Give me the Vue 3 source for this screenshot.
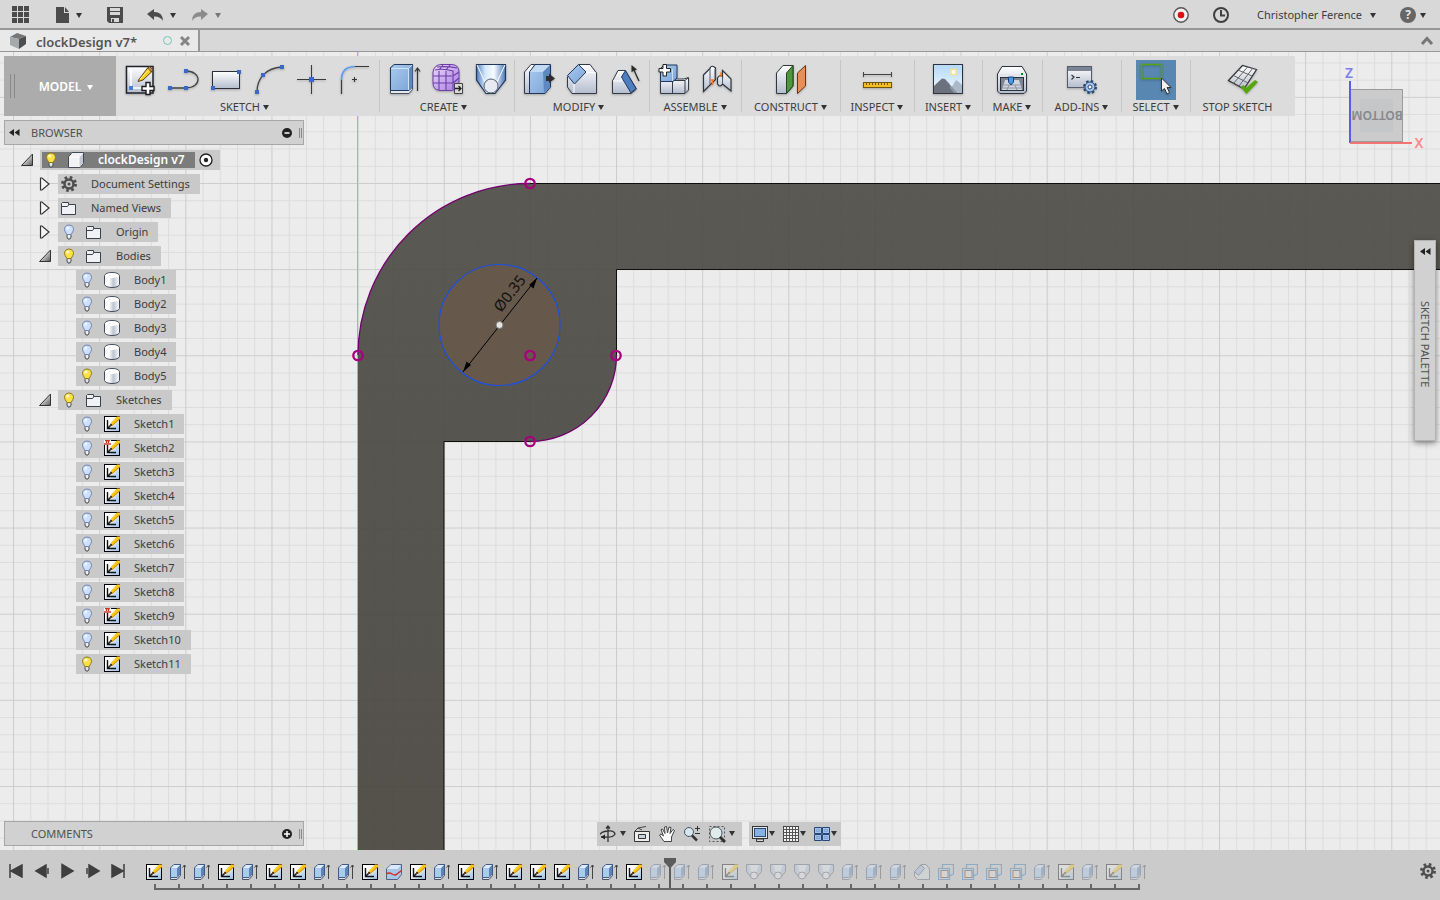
<script setup>
import { ref } from 'vue'

const groups = [
  { label: 'SKETCH', icons: ['t-sketch', 't-line', 't-rect', 't-arc', 't-point', 't-fillet'] },
  { label: 'CREATE', icons: ['t-extrude', 't-form', 't-loft'] },
  { label: 'MODIFY', icons: ['t-press', 't-chamfer', 't-draft'] },
  { label: 'ASSEMBLE', icons: ['t-component', 't-joint'] },
  { label: 'CONSTRUCT', icons: ['t-plane'] },
  { label: 'INSPECT', icons: ['t-measure'] },
  { label: 'INSERT', icons: ['t-image'] },
  { label: 'MAKE', icons: ['t-print'] },
  { label: 'ADD-INS', icons: ['t-script'] },
  { label: 'SELECT', icons: ['t-select'], active: true },
  { label: 'STOP SKETCH', icons: ['t-stop'], noMenu: true },
]

const tree = [
  { name: 'clockDesign v7', level: 0, open: true, bulb: 'on', icon: 'i-cube', root: true },
  { name: 'Document Settings', level: 1, open: false, icon: 'i-gear' },
  { name: 'Named Views', level: 1, open: false, icon: 'i-folder' },
  { name: 'Origin', level: 1, open: false, bulb: 'off', icon: 'i-folder' },
  { name: 'Bodies', level: 1, open: true, bulb: 'on', icon: 'i-folder' },
  ...[1, 2, 3, 4, 5].map((n) => ({
    name: `Body${n}`,
    level: 2,
    bulb: n === 5 ? 'on' : 'off',
    icon: 'i-body',
  })),
  { name: 'Sketches', level: 1, open: true, bulb: 'on', icon: 'i-folder' },
  ...[1, 2, 3, 4, 5, 6, 7, 8, 9, 10, 11].map((n) => ({
    name: `Sketch${n}`,
    level: 2,
    bulb: n === 11 ? 'on' : 'off',
    icon: n === 2 || n === 9 ? 'i-sketch-pin' : 'i-sketch',
  })),
]

// one letter per timeline feature
const featureIcons = {
  S: ['i-sketch', 'Sketch'],
  E: ['i-extrude', 'Extrude'],
  X: ['i-split', 'Split body'],
  L: ['i-loft', 'Loft'],
  C: ['i-chamfer', 'Chamfer'],
  P: ['i-pattern', 'Pattern'],
}
const features = 'SEESESSEESXSESESSSEESEEESLLLLEEECPPPPESESE'.split('').map((k) => featureIcons[k])
const current = ref(21)

const playback = [
  { name: 'Go to start', d: 'M1 2V16M2 9L13 3V15Z' },
  { name: 'Step back', d: 'M2 9L12 3V15ZM14 6V12' },
  { name: 'Play', d: 'M3 2.500L14 9L3 15.500Z' },
  { name: 'Step forward', d: 'M3 6V12M5 3L15 9L5 15Z' },
  { name: 'Go to end', d: 'M3 3L14 9L3 15ZM15 2V16' },
]

const navTools = [
  [
    { name: 'Orbit', icon: 'n-orbit', menu: true },
    { name: 'Look at', icon: 'n-look' },
    { name: 'Pan', icon: 'n-pan' },
    { name: 'Zoom', icon: 'n-zoom' },
    { name: 'Zoom window', icon: 'n-window', menu: true },
  ],
  [
    { name: 'Display settings', icon: 'n-display', menu: true },
    { name: 'Grid and snaps', icon: 'n-grid', menu: true },
    { name: 'Viewports', icon: 'n-views', menu: true },
  ],
]

const snapPoints = [
  [530, 183],
  [358, 355],
  [530, 355],
  [616, 355],
  [530, 441],
]
</script>

<template>
  <div class="app">
    <svg class="sprite" aria-hidden="true">
      <defs>
        <linearGradient id="g-steel" x1="0" y1="0" x2="0" y2="1">
          <stop offset="0" stop-color="#fff" />
          <stop offset="1" stop-color="#b4bccd" />
        </linearGradient>
        <linearGradient id="g-blue" x1="0" y1="0" x2="1" y2="1">
          <stop offset="0" stop-color="#a9cbef" />
          <stop offset="1" stop-color="#7ba3d6" />
        </linearGradient>
        <linearGradient id="g-loft" x1="0" y1="0" x2="1" y2="0">
          <stop offset="0" stop-color="#4f7cbc" />
          <stop offset=".3" stop-color="#d6e9fc" />
          <stop offset=".6" stop-color="#f7fbff" />
          <stop offset="1" stop-color="#4f7cbc" />
        </linearGradient>
        <linearGradient id="g-purple" x1="0" y1="0" x2="1" y2="1">
          <stop offset="0" stop-color="#ead9fb" />
          <stop offset="1" stop-color="#a87be0" />
        </linearGradient>
        <linearGradient id="g-sky" x1="0" y1="0" x2="0" y2="1">
          <stop offset="0" stop-color="#b4d9f7" />
          <stop offset="1" stop-color="#f1f9ff" />
        </linearGradient>
        <linearGradient id="g-body" x1="0" y1="0" x2="1" y2="0">
          <stop offset="0" stop-color="#fff" />
          <stop offset=".3" stop-color="#fff" />
          <stop offset=".6" stop-color="#bfc5cf" />
          <stop offset="1" stop-color="#fff" />
        </linearGradient>
        <linearGradient id="g-page" x1="0" y1="0" x2="1" y2="1">
          <stop offset=".3" stop-color="#fff" />
          <stop offset="1" stop-color="#8fbce8" />
        </linearGradient>
        <linearGradient id="g-tri" x1="0" y1="0" x2="1" y2="1">
          <stop offset=".3" stop-color="#eee" />
          <stop offset="1" stop-color="#555" />
        </linearGradient>
      </defs>

      <!-- toolbar icons -->
      <symbol id="t-sketch" viewBox="0 0 40 40">
        <path d="M6.500 6.500H33V33H6.500Z" fill="url(#g-steel)" stroke="#1f232b" stroke-width="1.500" />
        <path d="M11 10V28H25" fill="none" stroke="#fff" stroke-width="1.500" />
        <path d="M18.500 20L28 7.500L32.500 11L23 20L18 21.500Z" fill="#ffcd1c" stroke="#5b4316" />
        <path d="M27.500 8L29.500 6.500L33 9.500L31.500 12Z" fill="#c9864e" stroke="#5b3a1a" />
        <path d="M20 19L29 9.500" stroke="#fff3a0" />
        <rect x="9" y="26" width="4" height="4" fill="#3f7fd8" />
        <path d="M26 22.500h4v4h4v4h-4v4h-4v-4h-4v-4h4Z" fill="#fff" stroke="#1c1c1c" stroke-width="1.400" />
      </symbol>
      <symbol id="t-line" viewBox="0 0 40 40">
        <path d="M7 28H23C39 28 39 11 23 11" fill="none" stroke="#444" stroke-width="1.300" />
        <path d="M5 26h4v4h-4zM21 26h4v4h-4zM21 9h4v4h-4z" fill="#3a69c9" />
      </symbol>
      <symbol id="t-rect" viewBox="0 0 40 40">
        <rect x="6.500" y="11.500" width="27" height="17" fill="url(#g-steel)" stroke="#2c2f36" />
        <path d="M31 10h4v4h-4zM5 26h4v4h-4z" fill="#3a69c9" />
      </symbol>
      <symbol id="t-arc" viewBox="0 0 40 40">
        <path d="M8 32C8 18 17 8 33 7" fill="none" stroke="#444" stroke-width="1.300" />
        <path d="M6 30h4v4h-4zM12 13h4v4h-4zM31 5h4v4h-4z" fill="#3a69c9" />
      </symbol>
      <symbol id="t-point" viewBox="0 0 40 40">
        <path d="M5 19.500H34M19.500 5V34" stroke="#3b3b3b" />
        <rect x="17" y="17" width="5" height="5" fill="#3a69c9" />
      </symbol>
      <symbol id="t-fillet" viewBox="0 0 40 40">
        <path d="M20 6.500H34M6.500 20V34" stroke="#3b3b3b" stroke-width="1.200" />
        <path d="M6.500 20C6.500 11 11 6.500 20 6.500" fill="none" stroke="#5b9bf0" stroke-width="1.500" />
        <path d="M17 19.500h5M19.500 17v5" stroke="#333" />
      </symbol>
      <symbol id="t-extrude" viewBox="0 0 40 40">
        <path d="M6.500 8L10 4.500H28.500V29.500L25 33.500H6.500Z" fill="#e5e8ee" stroke="#4a505c" />
        <path d="M6.500 8L10 4.500H28.500V27L25 30.500H6.500Z" fill="url(#g-blue)" stroke="#21365c" />
        <path d="M7 8.500H24.500V30M24.500 8.500L28 5" fill="none" stroke="#cfe3f8" />
        <path d="M28.500 5V27L25 30.500V8.500Z" fill="#5e87bd" />
        <path d="M33.500 9V31M31 11.500L33.500 8L36 11.500" fill="none" stroke="#333" stroke-width="1.200" />
      </symbol>
      <symbol id="t-form" viewBox="0 0 40 40">
        <path d="M6 12Q7 5 14 4.500H25Q32 5 32 12V22Q31 30 24 30.500H13Q6 30 6 23Z" fill="url(#g-purple)" stroke="#6b3fa5" />
        <path d="M6 16H25M6 23H26M12 11V30M19 11V31M8 10Q16 8 26 11V29M26 16L32 12M26 23L32 18M12 10L16 5M19 10L23 5M10 7Q20 6 30 8" fill="none" stroke="#6b3fa5" stroke-width="1.100" />
        <path d="M27.500 23.500H35.500V33.500H27.500Z" fill="#d9d9d9" stroke="#444" />
        <path d="M28 28.500H34M31.500 26L34 28.500L31.500 31" fill="none" stroke="#222" stroke-width="1.300" />
      </symbol>
      <symbol id="t-loft" viewBox="0 0 40 40">
        <path d="M6.500 4.500H35.500V20L25 33.500H16L6.500 20Z" fill="url(#g-loft)" stroke="#21365c" stroke-width="1.200" />
        <path d="M7 5L15 22M35 5L27 22" stroke="#fff" />
        <circle cx="21" cy="26" r="7" fill="#e7ebf1" stroke="#555d6b" />
      </symbol>
      <symbol id="t-press" viewBox="0 0 40 40">
        <path d="M5.500 12L12 4.500H20V33.500H5.500Z" fill="url(#g-steel)" stroke="#343a46" />
        <path d="M10.500 12L16 4.500H31.500V27L26 33.500H10.500Z" fill="url(#g-blue)" stroke="#21365c" />
        <path d="M11 12H24L31 5H17Z" fill="#c3daf3" />
        <path d="M24 12L31 5V27L25 33Z" fill="#5d88c2" />
        <path d="M27 16H30V13.500L36 18.500L30 23V21H27Z" fill="#2d2d2d" />
      </symbol>
      <symbol id="t-chamfer" viewBox="0 0 40 40">
        <path d="M5.500 17L17 4.500H28L34.500 13V33.500H10L5.500 27Z" fill="url(#g-steel)" stroke="#343a46" />
        <path d="M12 24L24 12L34 13M12 24V33" fill="none" stroke="#fff" />
        <path d="M5.500 15.500L16.500 4.500L24 12L12.500 24Z" fill="url(#g-blue)" stroke="#21365c" />
      </symbol>
      <symbol id="t-draft" viewBox="0 0 40 40">
        <path d="M7.500 21L13 10.500H20L31.500 29L26 33.500H7.500Z" fill="url(#g-steel)" stroke="#343a46" />
        <path d="M8 21H16L20 11" fill="none" stroke="#fff" />
        <path d="M16.500 17L20.500 10.500L31 28.500L26 33Z" fill="#4d7fc0" stroke="#21365c" />
        <path d="M34 21L28 8" stroke="#2b2b2b" stroke-width="1.300" />
        <path d="M26.500 5L32 9.500L26.500 12Z" fill="#2b2b2b" />
      </symbol>
      <symbol id="t-component" viewBox="0 0 40 40">
        <path d="M6.500 22L8 19H30L34.500 17.500V30L31 33.500H6.500Z" fill="url(#g-steel)" stroke="#343a46" />
        <path d="M18.500 20.500V33M19 20.500H31L34 18M31 21V33" fill="none" stroke="#343a46" />
        <path d="M6.500 8.500L10 5H23V18L19 21.500H6.500Z" fill="url(#g-blue)" stroke="#21365c" />
        <path d="M18.500 9V21" stroke="#c8def5" />
        <path d="M9 4.500h3.500v4h4v3.500h-4v4h-3.500v-4h-4v-3.500h4Z" fill="#fff" stroke="#222" />
      </symbol>
      <symbol id="t-joint" viewBox="0 0 40 40">
        <path d="M6.500 15L13 8.500V8Q15 4.500 18.500 8V19.500L6.500 31.500Z" fill="url(#g-steel)" stroke="#2f343d" stroke-width="1.200" />
        <path d="M13 9V24M18 9V19" stroke="#565c68" />
        <path d="M20.500 18Q23 14 25.500 17V10.500L34 19V31L25.500 24Q23 28 20.500 24Z" fill="url(#g-steel)" stroke="#2f343d" stroke-width="1.200" />
        <path d="M25.500 17V24" stroke="#565c68" />
        <path d="M15.500 20V25M24 12.500V17M13.500 20H17" stroke="#ff7418" stroke-width="1.500" />
      </symbol>
      <symbol id="t-plane" viewBox="0 0 40 40">
        <path d="M5.500 13L12 5.500H22V26L15.500 33.500H5.500Z" fill="url(#g-steel)" stroke="#333840" />
        <path d="M15.500 13L22 5.500V26L15.500 33.500Z" fill="#4e963e" stroke="#1e4717" />
        <path d="M26.500 13L34.500 5.500V26L26.500 33.500Z" fill="#e78f57" stroke="#6d3310" />
      </symbol>
      <symbol id="t-measure" viewBox="0 0 40 40">
        <path d="M6 14.500H35M6.500 12V17M34.500 12V17" stroke="#444" />
        <rect x="6.500" y="22.500" width="28" height="5" fill="#f3bf25" stroke="#73550a" />
        <path d="M9.500 23v2M12.500 23v2M15.500 23v2M18.500 23v2M21.500 23v2M24.500 23v2M27.500 23v2M30.500 23v2" stroke="#73550a" />
      </symbol>
      <symbol id="t-image" viewBox="0 0 40 40">
        <rect x="5.500" y="4.500" width="29" height="29" fill="url(#g-sky)" stroke="#2e343e" />
        <rect x="23" y="9.500" width="5" height="5" fill="#fff" stroke="#ffe08a" stroke-width="1.500" />
        <path d="M20 33L28 20L31 22L34 25V33Z" fill="#aab8c8" />
        <path d="M6 26L14 18.500L17 19L29 33H6Z" fill="#6b727e" />
        <path d="M17 19L22 24V28L26 33H29Z" fill="#8e96a3" />
      </symbol>
      <symbol id="t-print" viewBox="0 0 40 40">
        <path d="M5.500 14L10 6.500H30L34.500 14V31L32 33.500H8L5.500 31Z" fill="url(#g-steel)" stroke="#30353e" />
        <path d="M6 14H34V17H6Z" fill="#e3e7ed" />
        <rect x="8.500" y="17.500" width="23" height="13" fill="#7c8492" stroke="#2b2f36" />
        <path d="M13 20H27L30 30H10Z" fill="#cfd5de" />
        <path d="M10 28H30M12 25H28M17 25L15 30M23 25L25 30" stroke="#8d96a5" />
        <path d="M16.500 17H21.500V22L19 25L16.500 22Z" fill="#4c98e2" stroke="#16437e" />
        <rect x="29" y="13" width="2" height="2" fill="#0c8b1b" />
      </symbol>
      <symbol id="t-script" viewBox="0 0 40 40">
        <rect x="5.500" y="6.500" width="24" height="21" fill="url(#g-steel)" stroke="#565c69" />
        <path d="M6 7H29V11H6Z" fill="#7b8494" />
        <path d="M9.500 15L12 17L9.500 19.500M14 17.500H18" fill="none" stroke="#333" stroke-width="1.200" />
        <circle cx="28" cy="27" r="5.500" fill="#a7c4ea" stroke="#274774" stroke-width="3" stroke-dasharray="2.300 2.020" />
        <circle cx="28" cy="27" r="5" fill="#a7c4ea" stroke="#274774" />
        <circle cx="28" cy="27" r="2" fill="#fff" stroke="#274774" />
      </symbol>
      <symbol id="t-select" viewBox="0 0 40 40">
        <rect x="5.500" y="4.500" width="20" height="14" fill="none" stroke="#58a30c" stroke-width="1.500" />
        <path d="M25.500 18V31L28.500 28.500L31 34L33.500 32.500L31 27.500H35Z" fill="#f1f1f1" stroke="#333" />
      </symbol>
      <symbol id="t-stop" viewBox="0 0 40 40">
        <path d="M5.500 20.500L19.500 5.500L33.500 9.500L21 29Z" fill="url(#g-steel)" stroke="#333" stroke-width="1.200" />
        <path d="M10.500 15.500L25 23M15 10L29 16M10.500 23.500L24.500 7M16 26L29.500 8.500" fill="none" stroke="#666" />
        <path d="M17.500 27L20.500 25L23 28L32 20L35 22L23.500 34Z" fill="#55a607" />
      </symbol>

      <!-- 16px icons shared by the browser tree and the timeline -->
      <symbol id="i-on" viewBox="0 0 16 16">
        <path d="M6 10.500H10V13L9 15H7L6 13Z" fill="#dfe2e8" stroke="#4b4f58" />
        <path d="M8 1Q3.500 1.500 3.500 5.500Q3.700 7.500 6 10.500H10Q12.300 7.500 12.500 5.500Q12.500 1.500 8 1Z" fill="#fbe04a" stroke="#927b16" />
        <circle cx="6.800" cy="4" r="1.600" fill="#fffbd0" />
      </symbol>
      <symbol id="i-off" viewBox="0 0 16 16">
        <path d="M6 10.500H10V13L9 15H7L6 13Z" fill="#eceef2" stroke="#4b4f58" />
        <path d="M8 1Q3.500 1.500 3.500 5.500Q3.700 7.500 6 10.500H10Q12.300 7.500 12.500 5.500Q12.500 1.500 8 1Z" fill="#cfe0fb" stroke="#6d86b4" />
        <circle cx="6.800" cy="4" r="1.600" fill="#f4f8ff" />
      </symbol>
      <symbol id="i-cube" viewBox="0 0 16 16">
        <path d="M.5 5L4 .500H15.500V11.500L12 15.500H.5Z" fill="#f1f2f4" stroke="#444a55" />
        <path d="M1 5H11V15M11 5L15 1" fill="none" stroke="#fff" />
        <path d="M11.500 5L15 1.500V11L11.500 15Z" fill="#c3c7cf" />
      </symbol>
      <symbol id="i-gear" viewBox="0 0 16 16">
        <circle cx="8" cy="8" r="6.500" fill="none" stroke="#4e4e4e" stroke-width="3" stroke-dasharray="2.550 2.550" />
        <circle cx="8" cy="8" r="4.500" fill="none" stroke="#4e4e4e" stroke-width="2.500" />
        <circle cx="8" cy="8" r="1.500" fill="#4e4e4e" />
      </symbol>
      <symbol id="i-folder" viewBox="0 0 16 16">
        <path d="M.5 14.500V3.500L1.500 2.500H7.500V4.500H14.500V14.500Z" fill="#f0f1f4" stroke="#3a404c" />
        <path d="M1 6.500H6.500L8 4.500" fill="none" stroke="#3a404c" />
      </symbol>
      <symbol id="i-body" viewBox="0 0 16 16">
        <path d="M.5 3.500Q2 .5 8 .5T15.500 3.500V12.500Q14 15.500 8 15.500T.5 12.500Z" fill="url(#g-body)" stroke="#444b59" />
        <path d="M1 3.500Q3 6 8 6T15 3.500Q13 1 8 1T1 3.500Z" fill="#fff" />
      </symbol>
      <symbol id="i-sketch" viewBox="0 0 16 16">
        <rect x=".5" y=".5" width="15" height="15" fill="url(#g-page)" stroke="#000" />
        <path d="M3.500 4V12.500H12M4 12L8 8" fill="none" stroke="#111" stroke-width="1.400" />
        <path d="M5.500 10.500L6.500 7.500L8.500 9.500Z" fill="#5a3b18" />
        <path d="M6.800 7L13 .500H16V3L9 9.500Z" fill="#ffc912" />
        <path d="M8 9.500L15.500 3" stroke="#cf8511" />
      </symbol>
      <symbol id="i-sketch-pin" viewBox="0 0 16 16">
        <use href="#i-sketch" width="16" height="16" />
        <path d="M0 0H7V5H0Z" fill="#fff" />
        <path d="M1 .500H6M2.500 1V3M4.500 1V3M0 4H7" stroke="#c43b20" stroke-width="1.300" />
      </symbol>
      <symbol id="i-extrude" viewBox="0 0 16 16">
        <path d="M.5 4L4 .500H10.500V11.500L7 15.500H.5Z" fill="#dfe3ea" stroke="#4b5466" />
        <path d="M.5 4L4 .500H10.500V9.500L7 13.500H.5Z" fill="#a9cbf0" stroke="#3d5b8c" />
        <path d="M7 4L10 1V9.500L7 13Z" fill="#5d83b8" />
        <path d="M1 4H7L10 1H4Z" fill="#dcecfb" />
        <path d="M14.500 1V15M12.500 3.500L14.500 1L16.500 3.500" fill="none" stroke="#444" />
      </symbol>
      <symbol id="i-split" viewBox="0 0 16 16">
        <path d="M.5 5L5 .500H15.500V10.500L11.500 15.500H.5Z" fill="#a8c6e8" stroke="#4f6282" />
        <path d="M1 5H11.500L15 1H5Z" fill="#dbeafa" />
        <path d="M.5 10Q3 8 6 10T11 10L15.500 6.500" fill="none" stroke="#d8271d" stroke-width="1.300" />
      </symbol>
      <symbol id="i-loft" viewBox="0 0 16 16">
        <path d="M.5 .500H15.500V7.500L10 14.500H6L.5 7.500Z" fill="#b3c7e2" stroke="#4b5a76" />
        <path d="M3 1H13L10 9H6Z" fill="#e9f1fb" />
        <circle cx="8" cy="11.500" r="3.500" fill="#eef0f4" stroke="#59606e" />
      </symbol>
      <symbol id="i-chamfer" viewBox="0 0 16 16">
        <path d="M.5 8L7 .500H12L15.500 5V15.500H3.500L.5 12Z" fill="#dcdfe5" stroke="#4b5466" />
        <path d="M.5 7.500L7 1L10.500 4.500L4.500 11.500Z" fill="#9dbfe6" stroke="#365382" />
      </symbol>
      <symbol id="i-pattern" viewBox="0 0 16 16">
        <path d="M.5 4.500H11.500V15.500H.5ZM4.500 4V.500H15.500V10L11.500 12" fill="none" stroke="#1871c4" stroke-width="1.200" />
        <rect x="3" y="6.500" width="7" height="7" fill="#e6e6e6" stroke="#333" />
      </symbol>

      <!-- navigation bar -->
      <symbol id="n-orbit" viewBox="0 0 18 18">
        <path d="M9 1V17M7 3.500L9 1L11 3.500" fill="none" stroke="#333" stroke-width="1.300" />
        <path d="M5 12H2M5 12Q14 13 16 9Q15 5 9 6Q1 7 1.500 9.500" fill="none" stroke="#333" stroke-width="1.300" />
        <path d="M2 12L6 9.500V14.500Z" fill="#222" />
      </symbol>
      <symbol id="n-look" viewBox="0 0 18 18">
        <path d="M1.500 6.500H16.500V16.500H1.500Z" fill="#eee" stroke="#333" />
        <path d="M5.500 9.500H12.500V13.500H5.500Z" fill="#ccd3df" stroke="#333" />
        <path d="M2 6L5 3L13 1.500M5 3L9 5" fill="none" stroke="#444" />
      </symbol>
      <symbol id="n-pan" viewBox="0 0 18 18">
        <path d="M6 16.500L1.500 10L3 9L5.500 11L3 4.500L4.500 4L7 8.500L6.500 2L8.500 1.500L9.500 8L11 2L13 2.500L12 8.500L15 4.500L16.500 5.500L13.500 12V16.500Z" fill="#fff" stroke="#444" />
      </symbol>
      <symbol id="n-zoom" viewBox="0 0 18 18">
        <circle cx="6" cy="7" r="4.500" fill="#d7e5ee" stroke="#4a5563" />
        <path d="M9 10.500L14 15.500" stroke="#333" stroke-width="2.500" />
        <path d="M12 3.500H17M14.500 1V6M12 8.500H17" stroke="#333" />
      </symbol>
      <symbol id="n-window" viewBox="0 0 18 18">
        <rect x="1.500" y="1.500" width="15" height="15" fill="none" stroke="#555" stroke-dasharray="2 2" />
        <circle cx="8" cy="8" r="6" fill="#dfece9" stroke="#4a5563" />
        <path d="M12 12L17 17" stroke="#333" stroke-width="3" />
      </symbol>
      <symbol id="n-display" viewBox="0 0 18 18">
        <rect x="1.500" y="1.500" width="15" height="12" fill="#e8e8e8" stroke="#333" />
        <rect x="3.500" y="3.500" width="11" height="8" fill="#88b2e3" stroke="#274774" />
        <path d="M5.500 14H12.500V16.500H5.500Z" fill="#ddd" stroke="#333" />
      </symbol>
      <symbol id="n-grid" viewBox="0 0 18 18">
        <rect x="1.500" y="1.500" width="15" height="15" fill="#f5f5f5" stroke="#444" />
        <path d="M4.500 1V17M7.500 1V17M10.500 1V17M13.500 1V17M1 4.500H17M1 7.500H17M1 10.500H17M1 13.500H17" stroke="#555" />
      </symbol>
      <symbol id="n-views" viewBox="0 0 18 18">
        <path d="M1.500 2.500H8.500V8.500H1.500ZM9.500 2.500H16.500V8.500H9.500ZM1.500 9.500H8.500V15.500H1.500ZM9.500 9.500H16.500V15.500H9.500Z" fill="#a4c2e8" stroke="#274774" />
        <path d="M3.500 4.500H6.500V6.500H3.500ZM11.500 4.500H14.500V6.500H11.500ZM3.500 11.500H6.500V13.500H3.500ZM11.500 11.500H14.500V13.500H11.500Z" fill="none" stroke="#7ba0d2" />
      </symbol>
    </svg>

    <header class="topbar">
      <button class="plain" aria-label="Show data panel">
        <svg width="18" height="18" viewBox="0 0 18 18" fill="#4b4b4b">
          <path d="M0 0h5v5H0zM6 0h5v5H6zM12 0h5v5h-5zM0 6h5v5H0zM6 6h5v5H6zM12 6h5v5h-5zM0 12h5v5H0zM6 12h5v5H6zM12 12h5v5h-5z" />
        </svg>
      </button>
      <button class="plain file" aria-label="File">
        <svg width="14" height="16" viewBox="0 0 14 16" fill="#4b4b4b"><path d="M0 0H8V6H13V16H0ZM9 0L13 5H9Z" /></svg>
        <i class="caret"></i>
      </button>
      <button class="plain save" aria-label="Save">
        <svg width="16" height="16" viewBox="0 0 16 16">
          <path d="M0 0H16V16H2L0 14Z" fill="#4b4b4b" />
          <path d="M3 1H13V8H3ZM4 11H12V15H4Z" fill="#d8d8d8" />
          <path d="M5 12H7V15H5ZM3 4H13V5H3Z" fill="#4b4b4b" />
        </svg>
      </button>
      <button class="plain undo" aria-label="Undo">
        <svg width="17" height="14" viewBox="0 0 17 14"><path d="M0 6L7 1V4Q16 4 16 13Q13 8 7 8.500V12Z" fill="#4b4b4b" /></svg>
        <i class="caret"></i>
      </button>
      <button class="plain redo" aria-label="Redo">
        <svg width="17" height="14" viewBox="0 0 17 14"><path d="M16 6L9 1V4Q0 4 0 13Q3 8 9 8.500V12Z" fill="#8b8b8b" /></svg>
        <i class="caret"></i>
      </button>
      <div class="account">
        <button class="plain" aria-label="Record">
          <svg width="16" height="16" viewBox="0 0 16 16">
            <circle cx="8" cy="8" r="7.200" fill="#f2f2f2" stroke="#555" stroke-width="1.400" />
            <circle cx="8" cy="8" r="3.300" fill="#e01010" />
          </svg>
        </button>
        <button class="plain" aria-label="Job status">
          <svg width="16" height="16" viewBox="0 0 16 16" fill="none" stroke="#3f3f3f" stroke-width="2">
            <circle cx="8" cy="8" r="7" />
            <path d="M8 3V8.500H12" />
          </svg>
        </button>
        <button class="plain user">Christopher Ference<i class="caret"></i></button>
        <button class="plain help" aria-label="Help">
          <span class="help-mark">?</span><i class="caret"></i>
        </button>
      </div>
    </header>

    <nav class="tabs">
      <div class="tab">
        <svg width="16" height="16" viewBox="0 0 16 16">
          <path d="M0 4L7 0L16 3L9 6Z" fill="#777" />
          <path d="M0 4L9 6V16L0 12Z" fill="#a4a9ac" />
          <path d="M9 6L16 3V11L9 16Z" fill="#4d4d4d" />
        </svg>
        <span class="tab-name">clockDesign v7*</span>
        <span class="tab-state"></span>
        <button class="plain" aria-label="Close tab">
          <svg width="10" height="10" viewBox="0 0 10 10"><path d="M1 1L9 9M9 1L1 9" stroke="#858585" stroke-width="3" /></svg>
        </button>
      </div>
      <button class="plain expand" aria-label="Collapse toolbar">
        <svg width="12" height="9" viewBox="0 0 12 9"><path d="M1 8L6 2.500L11 8" fill="none" stroke="#777" stroke-width="3" /></svg>
      </button>
    </nav>

    <main class="workspace">
      <svg class="canvas" role="img" aria-label="Sketch canvas">
        <defs>
          <pattern id="minor" width="17.228" height="17.228" patternUnits="userSpaceOnUse" x="357.600" y="183">
            <path d="M.5 0V17.228M0 .5H17.228" stroke="#000" stroke-opacity=".065" />
          </pattern>
          <pattern id="major" width="86.140" height="86.140" patternUnits="userSpaceOnUse" x="357.600" y="183">
            <path d="M.5 0V86.140M0 .5H86.140" stroke="#000" stroke-opacity=".07" />
          </pattern>
          <linearGradient id="solid" x1="0" y1="183" x2="0" y2="850" gradientUnits="userSpaceOnUse">
            <stop offset="0" stop-color="#4b4942" />
            <stop offset=".35" stop-color="#47453f" />
            <stop offset="1" stop-color="#434139" />
          </linearGradient>
        </defs>
        <g transform="translate(0 -52)">
          <rect width="100%" height="3000" fill="url(#minor)" />
          <rect width="100%" height="3000" fill="url(#major)" />
          <!-- slightly see-through so the grid stays visible under the solid -->
          <path
            d="M358 355.500A172 172 0 0 1 530 183.500H4000V269.500H616.500V355.500A86 86 0 0 1 530 441.500H444V3000H358Z"
            fill="url(#solid)"
            fill-opacity=".9"
          />
          <circle cx="499.500" cy="325" r="60.500" fill="#67594a" fill-opacity=".95" />
          <rect class="axis-line" x="357" y="52" width="1" height="3000" />
          <path d="M530 183.500H4000M4000 269.500H616.500V355M530 441.500H444V3000" fill="none" stroke="#0e0e0c" />
          <path d="M358 355A172 172 0 0 1 530 183.500M616.500 355A86.500 86.500 0 0 1 530 441.500" fill="none" stroke="#730070" stroke-width="1.300" />
          <circle cx="499.500" cy="325" r="60.500" fill="none" stroke="#1d50e0" stroke-width="1.200" />
          <path d="M463 372L537 278" stroke="#000" />
          <path d="M463 372L466.500 361.500L471 365ZM537 278L533.500 288.500L529 285Z" fill="#000" />
          <text class="dimension" transform="translate(501 313) rotate(-52)">Ø0.35</text>
          <circle cx="499.500" cy="325" r="3.500" fill="#e4e4e0" stroke="#777" />
          <circle
            v-for="([x, y], i) in snapPoints"
            :key="i"
            :cx="x"
            :cy="y + 0.5"
            r="4.700"
            fill="none"
            stroke="#a8007c"
            stroke-width="2.300"
          />
        </g>
      </svg>

      <div class="toolbar">
        <button class="mode">MODEL<i class="caret"></i></button>
        <section
          v-for="g in groups"
          :key="g.label"
          class="group"
          :class="{ active: g.active, wide: g.icons.length > 2 }"
        >
          <div class="tools">
            <button v-for="icon in g.icons" :key="icon" class="tool" :aria-label="icon.slice(2)">
              <svg width="40" height="40"><use :href="'#' + icon" /></svg>
            </button>
          </div>
          <button class="plain group-label" :class="{ 'no-menu': g.noMenu }">
            {{ g.label }}<i v-if="!g.noMenu" class="caret"></i>
          </button>
        </section>
      </div>

      <aside class="browser">
        <div class="panel-head">
          <button class="plain rewind" aria-label="Collapse browser">
            <svg width="11" height="7" viewBox="0 0 11 7"><path d="M5 0V7L0 3.500ZM10.500 0V7L5.500 3.500Z" fill="#222" /></svg>
          </button>
          <span class="panel-title">BROWSER</span>
          <button class="plain round" aria-label="Hide browser">
            <svg width="10" height="10" viewBox="0 0 10 10">
              <circle cx="5" cy="5" r="5" fill="#222" />
              <path d="M2.500 5H7.500" stroke="#fff" stroke-width="1.500" />
            </svg>
          </button>
          <i class="grip"></i>
        </div>
        <ul class="tree">
          <li v-for="node in tree" :key="node.name" class="node" :class="['level-' + node.level, { root: node.root }]">
            <button v-if="'open' in node" class="plain toggle" :aria-expanded="node.open" :aria-label="node.name">
              <svg width="12" height="14" viewBox="0 0 12 14">
                <path v-if="node.open" d="M.5 12.500L11.500 1V12.500Z" fill="url(#g-tri)" stroke="#333" />
                <path v-else d="M1.500 1V13H3L10 7L3 1Z" fill="#f4f4f4" stroke="#333" stroke-width="1.200" />
              </svg>
            </button>
            <div class="item">
              <div class="item-main">
                <button v-if="node.bulb" class="plain bulb" :aria-label="'Toggle ' + node.name">
                  <svg width="16" height="16"><use :href="'#i-' + node.bulb" /></svg>
                </button>
                <svg class="kind" width="16" height="16"><use :href="'#' + node.icon" /></svg>
                <span>{{ node.name }}</span>
              </div>
              <svg v-if="node.root" width="14" height="14" viewBox="0 0 14 14">
                <circle cx="7" cy="7" r="6" fill="#fff" stroke="#222" stroke-width="1.300" />
                <circle cx="7" cy="7" r="2.200" fill="#222" />
              </svg>
            </div>
          </li>
        </ul>
      </aside>

      <footer class="dock">
        <div class="panel-head">
          <span class="panel-title">COMMENTS</span>
          <button class="plain round" aria-label="Show comments">
            <svg width="10" height="10" viewBox="0 0 10 10">
              <circle cx="5" cy="5" r="5" fill="#222" />
              <path d="M2 5H8M5 2V8" stroke="#fff" stroke-width="1.500" />
            </svg>
          </button>
          <i class="grip"></i>
        </div>
        <div class="navbars">
          <div v-for="(bar, b) in navTools" :key="b" class="navbar" :class="{ compact: b === 1 }">
            <button v-for="t in bar" :key="t.name" class="plain nav-tool" :aria-label="t.name">
              <svg width="18" height="18"><use :href="'#' + t.icon" /></svg>
              <i v-if="t.menu" class="caret"></i>
            </button>
          </div>
        </div>
      </footer>

      <svg class="viewcube" width="84" height="92" viewBox="0 0 84 92">
        <rect x="9.500" y="25.500" width="52" height="52" fill="#cbcbcb" stroke="#9b9b9b" />
        <rect x="19" y="35" width="33" height="33" fill="#c5c6c7" />
        <text class="face" transform="translate(36 47) rotate(180)" text-anchor="middle">BOTTOM</text>
        <path d="M9 17V79" stroke="#5a5af0" stroke-width="2" />
        <path d="M9 79H71" stroke="#f47474" stroke-width="2" />
        <text x="8" y="14" class="axis z" text-anchor="middle">Z</text>
        <text x="78" y="84" class="axis x" text-anchor="middle">X</text>
      </svg>

      <aside class="palette">
        <button class="plain" aria-label="Expand sketch palette">
          <svg width="11" height="7" viewBox="0 0 11 7"><path d="M5 0V7L0 3.500ZM10.500 0V7L5.500 3.500Z" fill="#222" /></svg>
        </button>
        <span>SKETCH PALETTE</span>
      </aside>
    </main>

    <footer class="timeline">
      <div class="playback">
        <button v-for="p in playback" :key="p.name" class="plain" :aria-label="p.name">
          <svg width="17" height="18" viewBox="0 0 17 18"><path :d="p.d" fill="#3f3f3f" stroke="#3f3f3f" stroke-width="1.500" /></svg>
        </button>
      </div>
      <ol class="features">
        <li v-for="([icon, name], i) in features" :key="i" :class="{ future: i >= current }">
          <button class="plain" :aria-label="name">
            <svg width="17" height="16"><use :href="'#' + icon" width="16" height="16" /></svg>
          </button>
          <svg v-if="i === current" class="marker" width="12" height="31" viewBox="0 0 12 31">
            <path d="M0 0H12V4L7 9.500V31H5V9.500L0 4Z" fill="#5c5c5c" />
          </svg>
        </li>
      </ol>
      <button class="plain settings" aria-label="Timeline settings">
        <svg width="16" height="16"><use href="#i-gear" /></svg>
      </button>
    </footer>
  </div>
</template>

<style>
body {
  margin: 0;
  overflow: hidden;
}
</style>

<style scoped>
.app {
  display: flex;
  flex-direction: column;
  height: 100vh;
  background: #ececec;
  color: #3c3c3c;
  font-family: "Noto Sans", "Open Sans", sans-serif;
  font-size: 11px;
  line-height: 16px;
}

.sprite {
  position: absolute;
  width: 0;
  height: 0;
}

svg {
  display: block;
  flex: none;
  overflow: visible;
}

.plain {
  display: flex;
  align-items: center;
  padding: 0;
  border: 0;
  background: none;
  color: inherit;
  font: inherit;
}

.caret {
  border: 3px solid transparent;
  border-top: 5px solid #333;
  border-bottom: 0;
}

/* Top bar */
.topbar {
  display: flex;
  align-items: center;
  box-sizing: border-box;
  height: 30px;
  padding: 2px 12px 0;
  background: #d8d8d8;
  border-bottom: 2px solid #979797;
}

.file,
.undo,
.redo {
  gap: 6px;
}

.file {
  margin-left: 26px;
}

.save {
  margin-left: 25px;
}

.undo {
  margin-left: 24px;
}

.redo {
  margin-left: 16px;
}

.redo .caret {
  border-top-color: #777;
}

.account {
  display: flex;
  align-items: center;
  gap: 24px;
  margin: 0 2px 0 auto;
}

.user {
  gap: 8px;
  margin-left: 4px;
}

.help {
  gap: 4px;
}

.help-mark {
  width: 16px;
  border-radius: 50%;
  background: #666;
  color: #e6e6e6;
  font-size: 12px;
  font-weight: 700;
  text-align: center;
}

/* Document tabs */
.tabs {
  display: flex;
  justify-content: space-between;
  box-sizing: border-box;
  height: 22px;
  background: #d8d8d8;
  border-bottom: 1px solid #979797;
}

.tab {
  display: flex;
  align-items: center;
  box-sizing: border-box;
  width: 200px;
  padding: 0 8px 0 10px;
  background: #e9e9e9;
  border-right: 2px solid #979797;
}

.tab-name {
  margin-left: 10px;
  padding-top: 3px;
  color: #555;
  font-size: 13px;
  font-weight: 600;
}

.tab-state {
  width: 7px;
  height: 7px;
  margin: 0 8px 0 auto;
  border: 1px solid #6cc9b4;
  border-radius: 50%;
}

.expand {
  margin-right: 7px;
}

/* Workspace */
.workspace {
  position: relative;
  display: flex;
  flex: 1;
  flex-direction: column;
  align-items: flex-start;
  min-height: 0;
  overflow: hidden;
}

.canvas {
  position: absolute;
  inset: 0;
  width: 100%;
  height: 100%;
  overflow: hidden;
}

.axis-line {
  fill: #6fdc6f;
}

.dimension {
  font-size: 15px;
  fill: #111;
}

.toolbar,
.browser,
.dock {
  position: relative;
}

.toolbar {
  display: grid;
  grid-template-columns: 112px 263px 135px 135px 92px 99px 74px 68px 60px 79px 69px 105px;
  height: 60px;
  margin: 4px 0 0 4px;
  background: #dcdcdc;
}

.mode {
  display: flex;
  align-items: center;
  justify-content: center;
  gap: 6px;
  padding: 2px 0 0 12px;
  border: 0;
  background:
    linear-gradient(#8a8a8a, #8a8a8a) 6px 18px / 1px 24px no-repeat,
    linear-gradient(#8a8a8a, #8a8a8a) 10px 18px / 1px 24px no-repeat,
    #acacac;
  color: #fff;
  font: 600 12px/16px "Noto Sans", sans-serif;
}

.mode .caret {
  border-top-color: #fff;
}

.group {
  display: flex;
  flex-direction: column;
  align-items: center;
  padding-top: 4px;
  background: linear-gradient(#c6c6c6, #c6c6c6) left 4px / 1px 52px no-repeat;
}

.mode + .group {
  background: none;
}

.tools {
  display: flex;
  gap: 3px;
}

.tool {
  padding: 0;
  border: 0;
  background: none;
}

.tool svg {
  filter: drop-shadow(0 1px 1px rgba(0, 0, 0, 0.25));
}

.active .tool {
  background: #5887b1;
}

.group-label {
  gap: 3px;
  height: 14px;
}

.wide .group-label {
  padding-right: 6px;
}

.group-label.no-menu {
  padding-right: 10px;
}

/* Browser and comments */
.panel-head {
  display: flex;
  align-items: center;
  box-sizing: border-box;
  width: 300px;
  height: 25px;
  border: 1px solid #a6a6a6;
  background: #d1d1d1;
  color: #505050;
}

.browser {
  margin: 4px 0 0 4px;
}

.rewind {
  width: 26px;
  padding-left: 4px;
  box-sizing: border-box;
}

.panel-title:first-child {
  margin-left: 26px;
}

.round {
  margin-left: auto;
}

.grip {
  width: 1px;
  height: 10px;
  margin: 0 1px 0 7px;
  border: solid #888;
  border-width: 0 1px;
}

.tree {
  margin: 3px 0 0;
  padding: 0;
  list-style: none;
}

.node {
  display: flex;
  align-items: center;
  height: 24px;
}

.toggle {
  width: 19px;
}

.level-0 {
  padding-left: 17px;
}

.level-1 {
  padding-left: 35px;
}

.level-2 {
  padding-left: 72px;
}

.item {
  display: flex;
  align-items: center;
  height: 20px;
  padding: 0 10px 0 2px;
  background: #c9c9c9;
}

.item-main {
  display: flex;
  align-items: center;
  height: 100%;
  padding-left: 1px;
}

.bulb {
  margin-right: 9px;
}

.kind {
  margin-right: 14px;
}

.root .item {
  gap: 4px;
  padding-right: 7px;
}

.root .item-main {
  height: 16px;
  padding-right: 10px;
  background: #7c7c7c;
  color: #fff;
  font-size: 12px;
  font-weight: 600;
}

.dock {
  display: flex;
  align-items: center;
  width: 100%;
  margin-top: auto;
  padding: 0 0 4px 4px;
  box-sizing: border-box;
}

.navbars {
  display: flex;
  gap: 7px;
  margin-left: 293px;
}

.navbar {
  display: flex;
  gap: 7px;
  padding: 3px 7px 3px 2px;
  background: #c9c9c9;
}

.navbar.compact {
  padding-right: 4px;
}

.nav-tool {
  gap: 3px;
}

.compact .nav-tool {
  gap: 0;
}

/* Overlays on the canvas */
.viewcube {
  position: absolute;
  top: 12px;
  right: 15px;
}

.face {
  fill: #85888c;
  font-size: 12px;
  font-weight: 600;
}

.axis {
  font-size: 14px;
  font-weight: 600;
}

.axis.z {
  fill: #7d7df2;
}

.axis.x {
  fill: #f58a8a;
}

.palette {
  position: absolute;
  top: 188px;
  right: 4px;
  display: flex;
  flex-direction: column;
  align-items: center;
  gap: 46px;
  box-sizing: border-box;
  width: 22px;
  height: 201px;
  padding-top: 7px;
  border: 1px solid #b2b2b2;
  background: #d1d1d1;
  box-shadow: 0 2px 6px rgba(0, 0, 0, 0.45);
  color: #505050;
}

.palette span {
  writing-mode: vertical-rl;
}

/* Timeline */
.timeline {
  display: flex;
  box-sizing: border-box;
  height: 50px;
  background: #cbcbcb;
}

.playback {
  display: flex;
  gap: 8px;
  height: 18px;
  margin: 12px 0 0 9px;
}

.features {
  display: flex;
  margin: 0 0 0 16px;
  padding: 0;
  list-style: none;
}

.features li {
  position: relative;
  width: 24px;
  height: 26px;
  padding-top: 14px;
  background:
    linear-gradient(#666, #666) 12px 34px / 2px 4px no-repeat,
    linear-gradient(#666, #666) 0 38px / 100% 2px no-repeat;
}

.features li:first-child {
  background-position: 12px 34px, 12px 38px;
}

.features li:last-child {
  background-size: 2px 4px, 14px 2px;
}

.features button {
  margin-left: 4px;
}

.future button {
  opacity: 0.35;
}

.marker {
  position: absolute;
  top: 8px;
  left: 18px;
}

.settings {
  height: 16px;
  margin: 13px 4px 0 auto;
}
</style>
